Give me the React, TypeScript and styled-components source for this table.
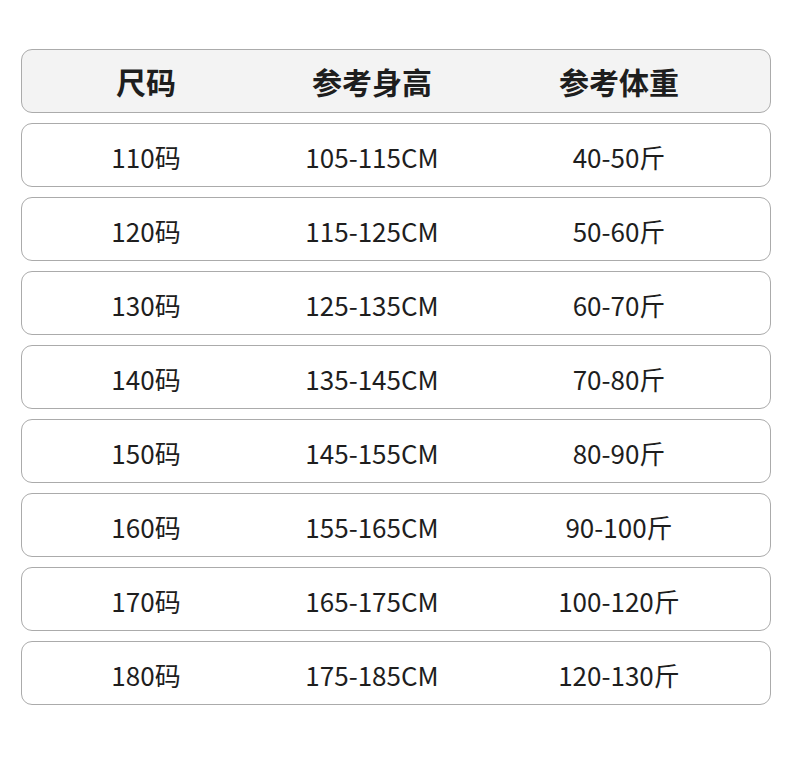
import styled, { createGlobalStyle } from "styled-components";

const GlobalStyle = createGlobalStyle`
  html, body {
    margin: 0;
    padding: 0;
    background: #ffffff;
  }
  body {
    font-family: "Noto Sans CJK SC", "Noto Sans", sans-serif;
    color: #1e1e1e;
  }
`;

const rows = [
  { size: "110码", height: "105-115CM", weight: "40-50斤" },
  { size: "120码", height: "115-125CM", weight: "50-60斤" },
  { size: "130码", height: "125-135CM", weight: "60-70斤" },
  { size: "140码", height: "135-145CM", weight: "70-80斤" },
  { size: "150码", height: "145-155CM", weight: "80-90斤" },
  { size: "160码", height: "155-165CM", weight: "90-100斤" },
  { size: "170码", height: "165-175CM", weight: "100-120斤" },
  { size: "180码", height: "175-185CM", weight: "120-130斤" },
];

export default function App() {
  return (
    <>
      <GlobalStyle />
      <Page>
        <Table>
          <Row $header>
            <Cell $header>尺码</Cell>
            <Cell $header>参考身高</Cell>
            <Cell $header>参考体重</Cell>
          </Row>
          {rows.map((r) => (
            <Row key={r.size}>
              <Cell>{r.size}</Cell>
              <Cell>{r.height}</Cell>
              <Cell>{r.weight}</Cell>
            </Row>
          ))}
        </Table>
      </Page>
    </>
  );
}

const Page = styled.div`
  width: 790px;
  height: 760px;
  padding: 49px 0 0 21px;
  box-sizing: border-box;
`;

const Table = styled.div`
  display: flex;
  flex-direction: column;
  gap: 10px;
  width: 750px;
`;

const Row = styled.div<{ $header?: boolean }>`
  display: grid;
  grid-template-columns: 248px 204px 290px;
  align-items: center;
  height: 64px;
  box-sizing: border-box;
  border: 1px solid #ababab;
  border-radius: 11px;
  background: ${({ $header }) => ($header ? "#f3f3f3" : "#ffffff")};
`;

const Cell = styled.div<{ $header?: boolean }>`
  text-align: center;
  font-size: ${({ $header }) => ($header ? "30px" : "26px")};
  font-weight: ${({ $header }) => ($header ? 700 : 400)};
  line-height: 1;
  color: #1e1e1e;
  white-space: nowrap;
  padding-top: ${({ $header }) => ($header ? "0" : "3px")};
`;
